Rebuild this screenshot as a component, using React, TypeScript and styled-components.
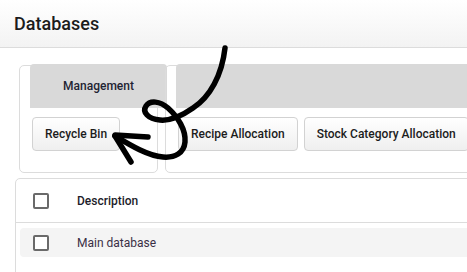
import React from 'react';
import styled, { createGlobalStyle } from 'styled-components';

const GlobalStyle = createGlobalStyle`
  body {
    margin: 0;
    background: #fff;
    font-family: Roboto, 'Liberation Sans', sans-serif;
    color: #222;
    overflow: hidden;
  }
`;

type Group = {
  title: string;
  buttons: string[];
  grow?: boolean;
};

const groups: Group[] = [
  { title: 'Management', buttons: ['Recycle Bin'] },
  { title: '', buttons: ['Recipe Allocation', 'Stock Category Allocation'], grow: true },
];

function Arrow() {
  return (
    <ArrowSvg width='467' height='272' viewBox='0 0 467 272'>
      <g fill='none' stroke='#000' strokeWidth='5.5' strokeLinecap='round' strokeLinejoin='round'>
        <path d='M225,48 C222,75 210,97 193,108 C183,115 170,121 160,120 C148,119 142,112 146,106 C150,100 160,101 168,108 C178,117 186,130 185,142 C184,153 175,158 163,157 C148,156 130,145 115,136' />
        <path d='M115,135 L148,137' />
        <path d='M115,136 L131,162' />
      </g>
    </ArrowSvg>
  );
}

function App() {
  return (
    <>
      <GlobalStyle />
      <Page>
        <Header>
          <Title>Databases</Title>
        </Header>
        <Content>
          <Ribbon>
            {groups.map((g, i) => (
              <GroupBox key={i} $grow={g.grow}>
                <GroupTab>{g.title}</GroupTab>
                <ButtonRow>
                  {g.buttons.map((b) => (
                    <RibbonButton key={b}>{b}</RibbonButton>
                  ))}
                </ButtonRow>
              </GroupBox>
            ))}
          </Ribbon>
          <TableCard>
            <HeadRow>
              <Check />
              <HeadLabel>Description</HeadLabel>
            </HeadRow>
            <DataRow>
              <Check />
              <Cell>Main database</Cell>
            </DataRow>
          </TableCard>
        </Content>
        <Arrow />
      </Page>
    </>
  );
}

const Page = styled.div`
  position: relative;
  width: 467px;
  height: 272px;
  overflow: hidden;
`;

const Header = styled.header`
  height: 47px;
  display: flex;
  align-items: center;
  padding-left: 14px;
  background: linear-gradient(#ffffff, #f3f3f3);
  border-bottom: 1px solid #dcdcdc;
`;

const Title = styled.h1`
  margin: 0;
  font-size: 18px;
  font-weight: 500;
  color: #1c1c1c;
  padding-bottom: 1px;
`;

const Content = styled.div`
  padding: 17px 0 0 15px;
`;

const Ribbon = styled.div`
  display: flex;
  gap: 7px;
  padding-left: 4px;
  width: 520px;
`;

const GroupBox = styled.div<{ $grow?: boolean }>`
  ${(p) => (p.$grow ? 'flex: 1;' : 'width: 137px;')}
  height: 106px;
  border: 1px solid #dcdcdc;
  border-radius: 5px;
`;

const GroupTab = styled.div`
  width: 100%;
  height: 44px;
  margin: -2px 0 0 10px;
  background: #d9d9d9;
  border-radius: 4px 4px 0 0;
  display: flex;
  align-items: center;
  justify-content: center;
  font-size: 12px;
  font-weight: 500;
  color: #1f2433;
`;

const ButtonRow = styled.div`
  display: flex;
  gap: 6px;
  margin-top: 9px;
  padding-left: 12px;
`;

const RibbonButton = styled.button`
  height: 34px;
  padding: 0 12px;
  border: 1px solid #d2d2d2;
  border-radius: 4px;
  background: linear-gradient(#ffffff, #efefef);
  font-family: Roboto, 'Liberation Sans', sans-serif;
  font-size: 12px;
  font-weight: 500;
  color: #1c1c1c;
  white-space: nowrap;
`;

const TableCard = styled.div`
  margin-top: 5px;
  width: 520px;
  height: 200px;
  border: 1px solid #dcdcdc;
  border-radius: 5px;
`;

const HeadRow = styled.div`
  height: 43px;
  display: flex;
  align-items: center;
  gap: 28px;
  padding-left: 17px;
  border-bottom: 1px solid #dcdcdc;
`;

const HeadLabel = styled.span`
  font-size: 12px;
  font-weight: 500;
  color: #1c1c2a;
`;

const DataRow = styled.div`
  height: 29px;
  margin: 5px 0 0 4px;
  display: flex;
  align-items: center;
  gap: 28px;
  padding-left: 13px;
  background: #f4f4f4;
  border-radius: 4px;
`;

const Cell = styled.span`
  font-size: 12px;
  color: #3a2f45;
`;

const Check = styled.span`
  width: 16px;
  height: 16px;
  box-sizing: border-box;
  border: 2px solid #6a6a6a;
  border-radius: 2px;
  background: #fff;
  flex-shrink: 0;
`;

const ArrowSvg = styled.svg`
  position: absolute;
  left: 0;
  top: 0;
  pointer-events: none;
`;

export default App;
